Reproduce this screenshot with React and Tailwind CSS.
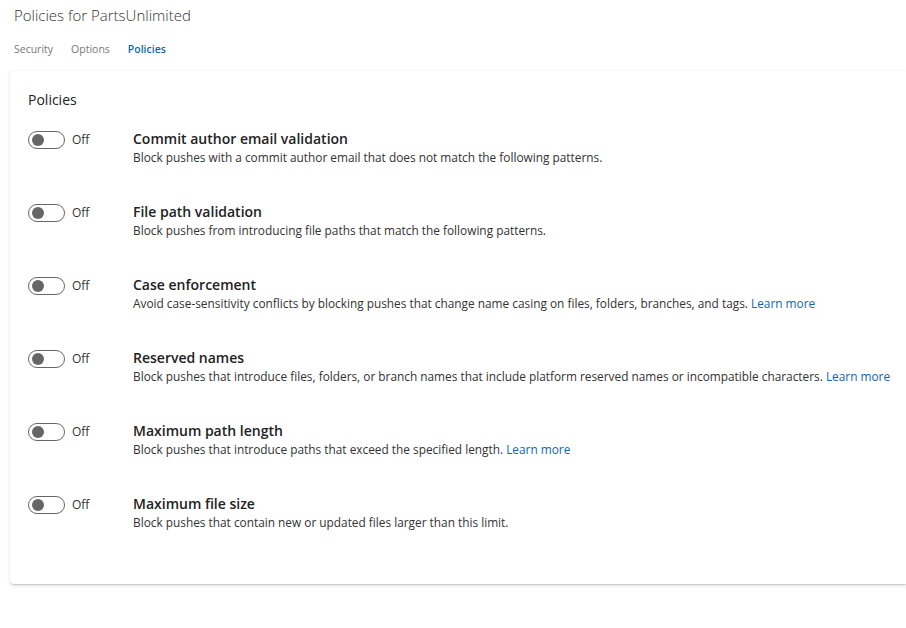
const policies = [
  {
    title: 'Commit author email validation',
    description: 'Block pushes with a commit author email that does not match the following patterns.',
  },
  {
    title: 'File path validation',
    description: 'Block pushes from introducing file paths that match the following patterns.',
  },
  {
    title: 'Case enforcement',
    description:
      'Avoid case-sensitivity conflicts by blocking pushes that change name casing on files, folders, branches, and tags.',
    learnMore: true,
  },
  {
    title: 'Reserved names',
    description:
      'Block pushes that introduce files, folders, or branch names that include platform reserved names or incompatible characters.',
    learnMore: true,
  },
  {
    title: 'Maximum path length',
    description: 'Block pushes that introduce paths that exceed the specified length.',
    learnMore: true,
  },
  {
    title: 'Maximum file size',
    description: 'Block pushes that contain new or updated files larger than this limit.',
  },
];

function Toggle() {
  return (
    <div className="flex items-center">
      <button className="flex h-[18px] w-[37px] items-center rounded-full border border-[#666666] bg-white pl-[3px]">
        <span className="h-[12px] w-[12px] rounded-full bg-[#666666]"></span>
      </button>
      <span className="ml-[7px] text-[12px] text-[#333333]">Off</span>
    </div>
  );
}

export default function App() {
  return (
    <div
      className="h-[628px] w-[906px] overflow-hidden bg-white text-[#333333]"
      style={{ fontFamily: '"Open Sans", "Noto Sans", sans-serif' }}
    >
      <div className="px-[14px] pt-[4px]">
        <h1 className="text-[15px] font-light leading-[22px] text-[#333333]">Policies for PartsUnlimited</h1>
        <div className="mt-[15px] flex gap-[18px] text-[10.5px] leading-[16px]">
          <span className="text-[#777777]">Security</span>
          <span className="text-[#777777]">Options</span>
          <span className="font-semibold text-[#1066b4]">Policies</span>
        </div>
      </div>
      <div className="ml-[10px] mt-[14px] h-[513px] rounded-l-[4px] bg-white pl-[18px] pt-[19px] shadow-[0_1.6px_3.6px_rgba(0,0,0,0.13),0_0.3px_0.9px_rgba(0,0,0,0.11)]">
        <h2 className="text-[14px] leading-[20px] text-[#222222]">Policies</h2>
        <div className="mt-[20px] flex flex-col gap-[37px]">
          {policies.map((p) => (
            <div key={p.title} className="flex">
              <div className="w-[105px] pt-[1px]">
                <Toggle />
              </div>
              <div>
                <div className="text-[14px] font-semibold leading-[18px] text-[#222222]">{p.title}</div>
                <div className="text-[11.85px] leading-[18px] text-[#333333]">
                  {p.description}
                  {p.learnMore && <span className="text-[#1066b4]"> Learn more</span>}
                </div>
              </div>
            </div>
          ))}
        </div>
      </div>
    </div>
  );
}
